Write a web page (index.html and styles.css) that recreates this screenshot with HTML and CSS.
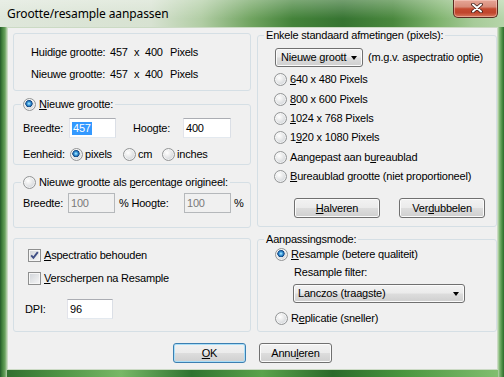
FILE: index.html
```html
<!doctype html>
<html>
<head>
<title>Grootte/resample aanpassen</title>
<link rel="stylesheet" href="styles.css">
</head>
<body>
<div class="window">
    <div class="titlebar">
        <span class="title">Grootte/resample aanpassen</span>
        <span class="close">
            <svg width="12" height="10" viewBox="0 0 12 10">
                <path d="M2 1.5 L10 8.5 M10 1.5 L2 8.5" stroke="#3b1a14" stroke-width="3.6" stroke-linecap="round"/>
                <path d="M2 1.5 L10 8.5 M10 1.5 L2 8.5" stroke="#ffffff" stroke-width="2" stroke-linecap="round"/>
            </svg>
        </span>
    </div>
    <div class="client">
        <div class="columns">
            <div class="col">
                <div class="box info">
                    <span>Huidige grootte:</span><span>457</span><span>x</span><span>400</span><span>Pixels</span>
                    <span>Nieuwe grootte:</span><span>457</span><span>x</span><span>400</span><span>Pixels</span>
                </div>

                <fieldset class="new-size">
                    <legend><label class="opt"><input type="radio" name="mode" checked><span><u>N</u>ieuwe grootte:</span></label></legend>
                    <div class="body">
                        <div class="row">
                            <span class="lbl w46">Breedte:</span>
                            <span class="edit w47"><span class="sel">457</span></span>
                            <span class="lbl hoogte">Hoogte:</span>
                            <span class="edit w48">400</span>
                        </div>
                        <div class="row units">
                            <span class="lbl w47">Eenheid:</span>
                            <label class="opt unit-px"><input type="radio" name="unit" checked><span>pixels</span></label>
                            <label class="opt unit-cm"><input type="radio" name="unit"><span>cm</span></label>
                            <label class="opt"><input type="radio" name="unit"><span>inches</span></label>
                        </div>
                    </div>
                </fieldset>

                <fieldset class="percent">
                    <legend><label class="opt"><input type="radio" name="mode"><span>Nieuwe grootte als <u>p</u>ercentage origineel:</span></label></legend>
                    <div class="body">
                        <div class="row">
                            <span class="lbl w45">Breedte:</span>
                            <span class="edit off w47">100</span>
                            <span class="lbl pct-hoogte">% Hoogte:</span>
                            <span class="edit off w47">100</span>
                            <span class="lbl pct">%</span>
                        </div>
                    </div>
                </fieldset>

                <div class="box options">
                    <label class="opt"><span class="check on"><svg width="11" height="11" viewBox="0 0 11 11"><path d="M2.2 5.4 L4.4 7.8 L8.8 2.2" fill="none" stroke="#3f4f86" stroke-width="1.9"/></svg></span><span><u>A</u>spectratio behouden</span></label>
                    <label class="opt"><span class="check"></span><span><u>V</u>erscherpen na Resample</span></label>
                    <div class="row dpi">
                        <span class="lbl w42">DPI:</span>
                        <span class="edit w46">96</span>
                    </div>
                </div>
            </div>

            <div class="col">
                <fieldset class="presets">
                    <legend>Enkele standaard afmetingen (pixels):</legend>
                    <div class="body">
                        <div class="row">
                            <span class="combo small"><span class="combo-text">Nieuwe groott</span><span class="arrow"></span></span>
                            <span class="hint">(m.g.v. aspectratio optie)</span>
                        </div>
                        <div class="list">
                            <label class="opt"><input type="radio" name="preset"><span><u>6</u>40 x 480 Pixels</span></label>
                            <label class="opt"><input type="radio" name="preset"><span><u>8</u>00 x 600 Pixels</span></label>
                            <label class="opt"><input type="radio" name="preset"><span><u>1</u>024 x 768 Pixels</span></label>
                            <label class="opt"><input type="radio" name="preset"><span>1<u>9</u>20 x 1080 Pixels</span></label>
                            <label class="opt"><input type="radio" name="preset"><span>Aangepast aan b<u>u</u>reaublad</span></label>
                            <label class="opt"><input type="radio" name="preset"><span><u>B</u>ureaublad grootte (niet proportioneel)</span></label>
                        </div>
                        <div class="pair">
                            <button class="btn wide"><u>H</u>alveren</button>
                            <button class="btn wide">Ver<u>d</u>ubbelen</button>
                        </div>
                    </div>
                </fieldset>

                <fieldset class="mode">
                    <legend>Aanpassingsmode:</legend>
                    <div class="body">
                        <label class="opt"><input type="radio" name="method" checked><span><u>R</u>esample (betere qualiteit)</span></label>
                        <div class="filter-label">Resample filter:</div>
                        <span class="combo filter"><span class="combo-text">Lanczos (traagste)</span><span class="arrow"></span></span>
                        <label class="opt replicate"><input type="radio" name="method"><span>R<u>e</u>plicatie (sneller)</span></label>
                    </div>
                </fieldset>
            </div>
        </div>

        <div class="buttons">
            <button class="btn default"><u>O</u>K</button>
            <button class="btn">Annu<u>l</u>eren</button>
        </div>
    </div>
</div>
</body>
</html>
```

FILE: styles.css
```css
html, body
{
    margin:0;
    height:100%;
}
body
{
    font:11px/13px "Liberation Sans", Arial, sans-serif;
    letter-spacing:-0.2px;
    color:#000;
    background:#3f7f37;
}
u
{
    text-decoration-thickness:1px;
    text-underline-offset:1px;
}

/* window frame */
.window
{
    box-sizing:border-box;
    width:504px;
    height:377px;
    padding:0 6px 7px 7px;
    display:flex;
    flex-direction:column;
    background:
        linear-gradient(to right, #23592a 0, #3f7e3a 2px, #6aa35f 5px, #b9d3b0 7px, transparent 7px),
        linear-gradient(to left, #2c6a2c 0, #4d8e45 2px, #8cbf7f 5px, #c0d9b6 6px, transparent 6px),
        linear-gradient(to right, #2d6b2c 0%, #4f9445 12%, #78b866 24%, #2f7330 38%, #5aa34b 52%, #2b6a2a 66%, #4a963f 80%, #85c172 100%);
}
.titlebar
{
    height:27px;
    margin:0 -6px 0 -7px;
    padding:0 6px 0 7px;
    display:flex;
    justify-content:space-between;
    align-items:flex-start;
    background:
        linear-gradient(to bottom, rgba(255,255,255,0.3), rgba(255,255,255,0) 70%),
        linear-gradient(to right, #dfe7db 0%, #d7e2d1 30%, #b1cda4 40%, #6fa35f 50%, #44833a 58%, #367431 68%, #4a883e 78%, #7fb36e 87%, #a7cb99 94%, #b6d5a9 100%);
}
.title
{
    padding-top:6px;
    font:12px/16px "Noto Sans", "Liberation Sans", sans-serif;
    letter-spacing:-0.1px;
    color:#000;
}
.close
{
    box-sizing:border-box;
    width:45px;
    height:18px;
    display:flex;
    align-items:center;
    justify-content:center;
    padding:0 0 1px 3px;
    border:1px solid #5a2a20;
    border-top:none;
    border-radius:0 0 5px 5px;
    background:linear-gradient(#e6a697 0%, #d88b79 40%, #c44a30 52%, #c0452c 75%, #d7795e 100%);
    box-shadow:inset 0 0 0 1px rgba(255,220,210,0.45);
}

/* client area */
.client
{
    flex:1;
    border:1px solid #cbdac4;
    background:#f0f0f0;
    display:flex;
    flex-direction:column;
}
.columns
{
    display:grid;
    grid-template-columns:238px 240px;
    column-gap:6px;
    padding-left:5px;
}
.col
{
    display:flex;
    flex-direction:column;
}

/* group boxes */
.box, fieldset
{
    box-sizing:border-box;
    margin:0;
    min-width:0;
    border:1px solid #d5dfe5;
    border-radius:3px;
}
fieldset
{
    padding:0;
}
legend
{
    margin-left:6px;
    padding:0 2px;
    line-height:13px;
}
.info
{
    height:58px;
    margin-top:5px;
    padding:7px 0 0 17px;
    display:grid;
    grid-template-columns:79px 24px 11px 25px auto;
    grid-auto-rows:22px;
    align-items:center;
}
.new-size
{
    height:67px;
    margin-top:7px;
}
.new-size legend, .percent legend
{
    margin-left:7px;
}
.new-size .body
{
    padding:7px 0 0 9px;
}
.percent
{
    height:52px;
    margin-top:11px;
}
.percent .body
{
    padding:4px 0 0 9px;
}
.options
{
    height:94px;
    margin-top:10px;
    padding:10px 0 0 14px;
    display:flex;
    flex-direction:column;
    align-items:flex-start;
}
.options .opt + .opt
{
    margin-top:10px;
}
.presets
{
    height:198px;
    margin-top:1px;
}
.presets .body
{
    padding:6px 0 0 16px;
}
.mode
{
    height:99px;
    margin-top:6px;
}
.mode .body
{
    padding:2px 0 0 17px;
    display:flex;
    flex-direction:column;
    align-items:flex-start;
}

/* rows and labels */
.row
{
    display:flex;
    align-items:center;
    white-space:nowrap;
}
.units
{
    height:13px;
    margin-top:10px;
}
.lbl { flex:none; }
.w42 { width:42px; }
.w45 { width:45px; }
.w46 { width:46px; }
.w47 { width:47px; }
.w48 { width:48px; }
.hoogte { margin-left:17px; width:50px; }
.pct-hoogte { margin-left:4px; width:65px; }
.pct { margin-left:3px; }
.unit-px { width:53px; }
.unit-cm { width:39px; }
.dpi
{
    margin:14px 0 0 -3px;
}

/* radio buttons and checkboxes */
.opt
{
    display:flex;
    align-items:center;
    gap:3px;
    height:13px;
    white-space:nowrap;
}
.row .opt
{
    gap:2px;
}
input[type=radio]
{
    -webkit-appearance:none;
    appearance:none;
    flex:none;
    box-sizing:border-box;
    width:13px;
    height:13px;
    margin:0;
    border:1px solid #939596;
    border-radius:50%;
    background:radial-gradient(circle at 38% 35%, #ffffff 0, #f1f1f1 25%, #d6d9dc 70%, #c5c9cd 100%);
    box-shadow:inset 0 0 0 1px rgba(255,255,255,0.6);
}
input[type=radio]:checked
{
    background:
        radial-gradient(circle at 45% 42%, #c4f0ff 0, #58b6ec 1.2px, #1f6cb2 2.6px, #0d3f78 3.4px, rgba(13,63,120,0) 3.9px),
        radial-gradient(circle at 38% 35%, #ffffff 0, #f1f1f1 25%, #d6d9dc 70%, #c5c9cd 100%);
}
.check
{
    flex:none;
    box-sizing:border-box;
    width:13px;
    height:13px;
    border:1px solid #8e8f8f;
    background:linear-gradient(135deg, #cfd3d8, #f7f7f7);
    box-shadow:inset 0 0 0 1px #f6f6f6;
}
.check svg
{
    display:block;
}

/* edit fields */
.edit
{
    flex:none;
    box-sizing:border-box;
    height:20px;
    padding:3px 0 0 2px;
    border:1px solid;
    border-color:#abadb3 #dbdfe6 #e3e9ef #e2e3ea;
    background:#fff;
}
.edit.off
{
    border-color:#b5b8bb;
    background:#f0f0f0;
    color:#7a7a7a;
}
.sel
{
    display:inline-block;
    padding:0 1px;
    background:#3399ff;
    color:#fff;
}

/* combos and buttons */
.combo, .btn
{
    box-sizing:border-box;
    border:1px solid #707070;
    border-radius:3px;
    background:linear-gradient(#f2f2f2 0%, #ebebeb 49%, #dddddd 51%, #cfcfcf 100%);
    box-shadow:inset 0 0 0 1px #fbfbfb;
}
.combo
{
    display:flex;
    align-items:center;
    height:19px;
    padding:0 5px 0 4px;
}
.combo-text
{
    flex:1;
    white-space:nowrap;
}
.arrow
{
    flex:none;
    width:0;
    height:0;
    margin-left:4px;
    border-left:3.5px solid transparent;
    border-right:3.5px solid transparent;
    border-top:4px solid #000;
}
.small
{
    width:88px;
    margin-left:1px;
    padding-left:5px;
}
.hint
{
    margin-left:5px;
}
.list
{
    margin-top:3px;
}
.list .opt
{
    height:19.4px;
}
.pair
{
    display:flex;
    gap:19px;
    margin:12px 0 0 20px;
}
.btn
{
    height:20px;
    width:73px;
    padding:0;
    font:inherit;
    letter-spacing:inherit;
    color:#000;
}
.btn.wide
{
    width:86px;
}
.btn.default
{
    border-color:#3c7fb1;
    box-shadow:inset 0 0 0 1px #a9def8;
}
.filter-label
{
    margin:5px 0 0 19px;
}
.filter
{
    width:172px;
    margin:5px 0 0 18px;
}
.replicate
{
    margin-top:9px;
}
.buttons
{
    display:flex;
    justify-content:center;
    gap:13px;
    margin-top:11px;
}
```
